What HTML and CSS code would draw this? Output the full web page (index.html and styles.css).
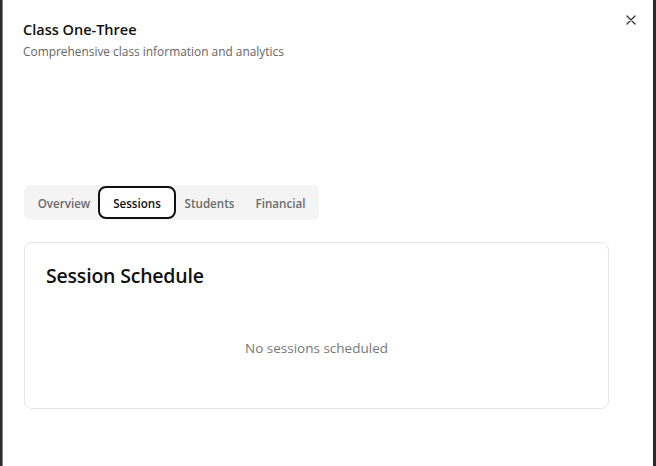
FILE: index.html
```html
<!DOCTYPE html>
<html>
<head>
<meta charset="utf-8">
<link rel="stylesheet" href="styles.css">
</head>
<body>
<div class="dialog">
  <button class="close" aria-label="Close">
    <svg width="10" height="10" viewBox="0 0 10 10"><path d="M1 1L9 9M9 1L1 9" stroke="#333" stroke-width="1.3" stroke-linecap="round"/></svg>
  </button>
  <header class="head">
    <h1 class="title">Class One-Three</h1>
    <p class="subtitle">Comprehensive class information and analytics</p>
  </header>
  <nav class="tabs">
    <span class="tab">Overview</span>
    <span class="tab active">Sessions</span>
    <span class="tab">Students</span>
    <span class="tab">Financial</span>
  </nav>
  <section class="card">
    <h2 class="card-title">Session Schedule</h2>
    <p class="empty">No sessions scheduled</p>
  </section>
</div>
</body>
</html>
```
FILE: styles.css
```css
html, body { margin: 0; padding: 0; height: 100%; }
body {
  background: #2b2b2b;
  font-family: "Open Sans", "Noto Sans", sans-serif;
  overflow: hidden;
}
.dialog {
  position: relative;
  box-sizing: border-box;
  margin-left: 2px;
  width: 651px;
  height: 100%;
  background: #fff;
  border-left: 1px solid #888;
  padding: 20px 44px 0 21px;
}
.close {
  position: absolute;
  top: 15px;
  right: 17px;
  border: 0;
  background: none;
  padding: 0;
  width: 10px;
  height: 10px;
  display: flex;
}
.head { height: 165px; }
.title {
  margin: 0 0 0 -1px;
  font-size: 14.5px;
  font-weight: 600;
  color: #111;
  line-height: 20px;
}
.subtitle {
  margin: 2px 0 0 -1px;
  font-size: 11.9px;
  color: #666;
  line-height: 18px;
}
.tabs {
  display: inline-grid;
  grid-template-columns: 72px 74px 71px 71px;
  align-items: center;
  background: #f4f4f5;
  border-radius: 6px;
  height: 35px;
  box-sizing: border-box;
  padding: 3px 3px 3px 4px;
}
.tab {
  font-size: 11.6px;
  font-weight: 600;
  color: #6b6b6b;
  text-align: center;
  height: 29px;
  line-height: 31px;
  border-radius: 5px;
}
.tab.active {
  background: #fff;
  color: #111;
  outline: 2px solid #111;
  border-radius: 6px;
}
.card {
  margin-top: 22px;
  border: 1px solid #e6e6e6;
  border-radius: 8px;
  height: 167px;
  box-sizing: border-box;
  padding: 20px 21px;
}
.card-title {
  margin: 0;
  font-size: 19.5px;
  font-weight: 600;
  color: #111;
  line-height: 26px;
  letter-spacing: -0.2px;
}
.empty {
  margin: 50px 0 0;
  text-align: center;
  font-size: 13.5px;
  color: #777;
}
```
